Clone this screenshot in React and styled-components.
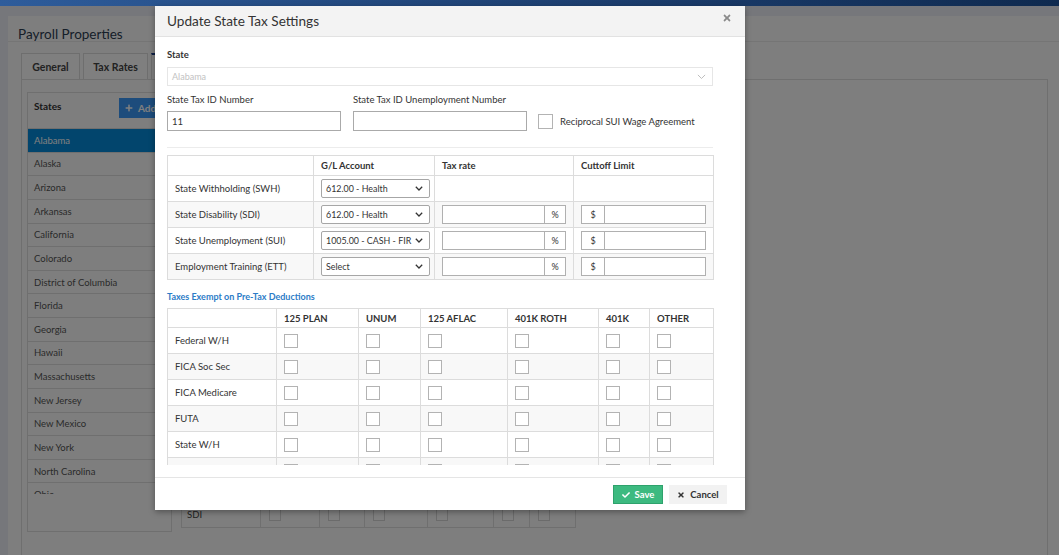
import React from "react";
import styled, { createGlobalStyle } from "styled-components";
import { FaCheck, FaTimes, FaPlus } from "react-icons/fa";

const GlobalStyle = createGlobalStyle`
  html, body { margin: 0; padding: 0; }
  body {
    font-family: Lato, "Open Sans", "Noto Sans", sans-serif;
    background: #eceff6;
    overflow: hidden;
  }
  * { box-sizing: border-box; }
`;

const Screen = styled.div`
  position: relative;
  width: 1059px;
  height: 555px;
  overflow: hidden;
  display: flex;
  flex-direction: column;
  background: #eceff6;
`;

const TopBar = styled.div`
  height: 6px;
  flex: none;
  background: linear-gradient(90deg, #2e5c9b 0%, #1d3f70 55%, #0f2a4f 100%);
`;

const Page = styled.div`
  flex: 1;
  display: flex;
  padding: 10px 0 0 8px;
  min-height: 0;
`;

const Panel = styled.div`
  flex: 1;
  background: #fdfdfd;
  display: flex;
  flex-direction: column;
`;

const PanelHeader = styled.div`
  height: 26px;
  padding: 10px 10px 0;
  font-size: 13.5px;
  line-height: 16px;
  color: #2c3e52;
  border-bottom: 1px solid #eaeaea;
`;

const TabBar = styled.div`
  display: flex;
  gap: 3px;
  margin-top: 11px;
  padding-left: 13px;
`;

const Tab = styled.div`
  height: 26px;
  width: ${(p) => p.$w}px;
  display: flex;
  align-items: center;
  justify-content: center;
  font-size: 10.5px;
  font-weight: 700;
  color: #444;
  border: 1px solid #dcdcdc;
  border-bottom: none;
  border-top: ${(p) => (p.$active ? "2px solid #1a3f8c" : "1px solid #dcdcdc")};
  background: #fff;
`;

const TabContent = styled.div`
  flex: 1;
  margin: 0 11px 0 13px;
  border: 1px solid #dedede;
  border-bottom: none;
  padding: 12px 5px 0;
  display: flex;
  align-items: flex-start;
  gap: 9px;
`;

const StatesBox = styled.div`
  width: 145px;
  height: 440px;
  border: 1px solid #dedede;
  display: flex;
  flex-direction: column;
`;

const StatesHeader = styled.div`
  height: 36px;
  flex: none;
  display: flex;
  justify-content: space-between;
  align-items: flex-start;
  padding: 5px 0 0 6px;
  border-bottom: 1px solid #dedede;
`;

const StatesTitle = styled.div`
  font-size: 10px;
  font-weight: 700;
  color: #333;
  margin-top: 2px;
`;

const AddButton = styled.div`
  width: 52px;
  height: 20px;
  background: #3b98f8;
  color: #fff;
  font-size: 10px;
  font-weight: 700;
  display: flex;
  align-items: center;
  gap: 5px;
  padding-left: 6px;
  svg { width: 8px; height: 8px; }
`;

const StateList = styled.div`
  height: 365px;
  overflow: hidden;
  flex: none;
`;

const StateRow = styled.div`
  height: 23.64px;
  display: flex;
  align-items: center;
  padding-left: 6px;
  font-size: 9.5px;
  color: ${(p) => (p.$selected ? "#fff" : "#555")};
  background: ${(p) => (p.$selected ? "#048ada" : "transparent")};
  border-bottom: 1px solid #dedede;
`;

const RightColumn = styled.div`
  margin-top: 259px;
`;

const BgTable = styled.table`
  border-collapse: collapse;
  table-layout: fixed;
  width: 394px;
`;

const BgCell = styled.td`
  height: ${(p) => p.$h || 26}px;
  border: 1px solid #dedede;
  padding: 0 5px;
  font-size: 9.5px;
  color: #444;
  vertical-align: middle;
`;

const BgCheck = styled.span`
  display: block;
  width: 12px;
  height: 12px;
  margin-left: 3px;
  border: 1px solid #d6d6d6;
  background: #fff;
`;

const Backdrop = styled.div`
  position: absolute;
  left: 0;
  right: 0;
  top: 6px;
  bottom: 0;
  background: rgba(0, 0, 0, 0.5);
`;

const Modal = styled.div`
  position: absolute;
  left: 155px;
  top: 6px;
  width: 590px;
  height: 504px;
  background: #fff;
  box-shadow: 0 2px 6px rgba(0, 0, 0, 0.35);
  display: flex;
  flex-direction: column;
`;

const ModalHeader = styled.div`
  height: 31px;
  flex: none;
  background: #f3f3f3;
  border-bottom: 1px solid #e2e2e2;
  display: flex;
  align-items: center;
  justify-content: space-between;
  padding: 0 13px 0 12px;
`;

const ModalTitle = styled.div`
  font-size: 13.6px;
  color: #333;
`;

const CloseIcon = styled.span`
  color: #8a8a8a;
  display: flex;
  margin-top: -6px;
  svg { width: 10px; height: 10px; }
`;

const ModalBody = styled.div`
  flex: 1;
  padding: 0 32px 12px 12px;
`;

const ScrollArea = styled.div`
  height: 428px;
  overflow-x: visible;
  overflow-y: clip;
  padding-top: 12px;
`;

const FieldLabel = styled.div`
  font-size: 9.5px;
  line-height: 11px;
  font-weight: ${(p) => (p.$bold ? 700 : 400)};
  color: #333;
`;

const StateSelect = styled.div`
  margin-top: 7px;
  height: 19px;
  border: 1px solid #e6e6e6;
  display: flex;
  align-items: center;
  justify-content: space-between;
  padding: 0 6px 0 4px;
  font-size: 9px;
  color: #c2c2c2;
`;

const IdRow = styled.div`
  margin-top: 8px;
  display: flex;
  align-items: flex-end;
  gap: 12px;
`;

const FieldGroup = styled.div`
  width: 174px;
  display: flex;
  flex-direction: column;
  gap: 6px;
`;

const TextInput = styled.div`
  height: 20px;
  border: 1px solid #aaa;
  display: flex;
  align-items: center;
  padding: 0 4px;
  font-size: 9.5px;
  color: #333;
`;

const CheckLabel = styled.div`
  display: flex;
  align-items: center;
  gap: 7px;
  height: 20px;
  margin-left: -1px;
  font-size: 9.5px;
  color: #333;
`;

const Box = styled.span`
  display: block;
  flex: none;
  width: ${(p) => p.$size || 14}px;
  height: ${(p) => p.$size || 14}px;
  border: 1px solid #b3b3b3;
  background: #fff;
`;

const Divider = styled.div`
  margin-top: 16px;
  height: 1px;
  background: #ececec;
`;

const DataTable = styled.table`
  margin-top: ${(p) => p.$mt || 0}px;
  width: 546px;
  border-collapse: collapse;
  table-layout: fixed;
`;

const HeadCell = styled.th`
  height: ${(p) => p.$h || 20}px;
  border: 1px solid #dcdcdc;
  padding: 0 7px;
  font-size: 9.5px;
  font-weight: 700;
  text-align: left;
  color: #333;
  background: #fff;
`;

const BodyRow = styled.tr`
  background: ${(p) => (p.$striped ? "#f8f8f8" : "#fff")};
`;

const Cell = styled.td`
  height: 26px;
  border: 1px solid #dcdcdc;
  padding: 0 7px;
  font-size: 9.5px;
  color: #333;
  vertical-align: middle;
`;

const GlSelect = styled.div`
  width: 109px;
  height: 19px;
  border: 1px solid #a6a6a6;
  border-radius: 2px;
  background: #fff;
  display: flex;
  align-items: center;
  gap: 3px;
  padding: 0 6px 0 4px;
  font-size: 8.9px;
  color: #333;
  white-space: nowrap;
  svg { flex: none; }
`;

const GlText = styled.span`
  flex: 1;
  overflow: hidden;
`;

const InputGroup = styled.div`
  display: flex;
  height: 19px;
`;

const GroupInput = styled.div`
  flex: 1;
  border: 1px solid #b0b0b0;
  background: #fff;
`;

const Addon = styled.div`
  width: ${(p) => p.$w}px;
  flex: none;
  border: 1px solid #b0b0b0;
  ${(p) => (p.$left ? "border-right: none;" : "border-left: none;")}
  background: #fff;
  display: flex;
  align-items: center;
  justify-content: center;
  font-size: 9px;
  color: #333;
`;

const SectionTitle = styled.div`
  margin-top: 11px;
  font-size: 9px;
  line-height: 11px;
  font-weight: 700;
  color: #2c7cc7;
`;

const ModalFooter = styled.div`
  height: 33px;
  flex: none;
  border-top: 1px solid #e5e5e5;
  display: flex;
  justify-content: flex-end;
  align-items: flex-start;
  gap: 6px;
  padding: 7px 18px 0 0;
`;

const Button = styled.div`
  height: 19px;
  width: ${(p) => p.$w}px;
  display: flex;
  align-items: center;
  justify-content: center;
  gap: 5px;
  font-size: 9.5px;
  font-weight: 700;
  color: ${(p) => (p.$primary ? "#fff" : "#333")};
  background: ${(p) => (p.$primary ? "#3dba80" : "#f2f2f2")};
  border: 1px solid ${(p) => (p.$primary ? "#2ea26c" : "#f2f2f2")};
  svg { width: 8px; height: 8px; }
`;

const Chevron = ({ color = "#333", w = 8, sw = 1.6 }) => (
  <svg width={w} height={w * 0.6} viewBox="0 0 10 6" fill="none">
    <polyline points="1,1 5,5 9,1" stroke={color} strokeWidth={sw} />
  </svg>
);

const states = [
  "Alabama", "Alaska", "Arizona", "Arkansas", "California", "Colorado",
  "District of Columbia", "Florida", "Georgia", "Hawaii", "Massachusetts",
  "New Jersey", "New Mexico", "New York", "North Carolina", "Ohio",
];

const taxRows = [
  { label: "State Withholding (SWH)", gl: "612.00 - Health", inputs: false },
  { label: "State Disability (SDI)", gl: "612.00 - Health", inputs: true },
  { label: "State Unemployment (SUI)", gl: "1005.00 - CASH - FIR", inputs: true },
  { label: "Employment Training (ETT)", gl: "Select", inputs: true },
];

const planCols = [
  { name: "", w: 109 },
  { name: "125 PLAN", w: 82 },
  { name: "UNUM", w: 62 },
  { name: "125 AFLAC", w: 87 },
  { name: "401K ROTH", w: 91 },
  { name: "401K", w: 51 },
  { name: "OTHER", w: 64 },
];

const exemptRows = ["Federal W/H", "FICA Soc Sec", "FICA Medicare", "FUTA", "State W/H", "SDI"];

/* rows of the page's own table; only the last one shows below the dialog */
const bgRows = ["", "", "", "", "", "SDI"];
const bgCols = [79, 59, 45, 63, 66, 36, 46];

export default function App() {
  return (
    <>
      <GlobalStyle />
      <Screen>
        <TopBar />
        <Page>
          <Panel>
            <PanelHeader>Payroll Properties</PanelHeader>
            <TabBar>
              <Tab $w={59}>General</Tab>
              <Tab $w={65}>Tax Rates</Tab>
              <Tab $w={80} $active>State Taxes</Tab>
            </TabBar>
            <TabContent>
              <StatesBox>
                <StatesHeader>
                  <StatesTitle>States</StatesTitle>
                  <AddButton>
                    <FaPlus /> Add
                  </AddButton>
                </StatesHeader>
                <StateList>
                  {states.map((s, i) => (
                    <StateRow key={s} $selected={i === 0}>
                      {s}
                    </StateRow>
                  ))}
                </StateList>
              </StatesBox>
              <RightColumn>
                <BgTable>
                  <colgroup>
                    {bgCols.map((w, i) => (
                      <col key={i} style={{ width: w }} />
                    ))}
                  </colgroup>
                  <tbody>
                    <tr>
                      {bgCols.map((w, i) => (
                        <BgCell key={i} $h={20} />
                      ))}
                    </tr>
                    {bgRows.map((r, k) => (
                      <tr key={k}>
                        <BgCell>{r}</BgCell>
                        {bgCols.slice(1).map((w, i) => (
                          <BgCell key={i}>
                            <BgCheck />
                          </BgCell>
                        ))}
                      </tr>
                    ))}
                  </tbody>
                </BgTable>
              </RightColumn>
            </TabContent>
          </Panel>
        </Page>

        <Backdrop />

        <Modal>
          <ModalHeader>
            <ModalTitle>Update State Tax Settings</ModalTitle>
            <CloseIcon>
              <FaTimes />
            </CloseIcon>
          </ModalHeader>
          <ModalBody>
            <ScrollArea>
              <FieldLabel $bold>State</FieldLabel>
              <StateSelect>
                <span>Alabama</span>
                <Chevron color="#b5b5b5" w={9} sw={1} />
              </StateSelect>
              <IdRow>
                <FieldGroup>
                  <FieldLabel>State Tax ID Number</FieldLabel>
                  <TextInput>11</TextInput>
                </FieldGroup>
                <FieldGroup>
                  <FieldLabel>State Tax ID Unemployment Number</FieldLabel>
                  <TextInput />
                </FieldGroup>
                <CheckLabel>
                  <Box $size={15} />
                  Reciprocal SUI Wage Agreement
                </CheckLabel>
              </IdRow>
              <Divider />
              <DataTable $mt={7}>
                <colgroup>
                  <col style={{ width: 146 }} />
                  <col style={{ width: 121 }} />
                  <col style={{ width: 139 }} />
                  <col style={{ width: 140 }} />
                </colgroup>
                <thead>
                  <tr>
                    <HeadCell />
                    <HeadCell>G/L Account</HeadCell>
                    <HeadCell>Tax rate</HeadCell>
                    <HeadCell>Cuttoff Limit</HeadCell>
                  </tr>
                </thead>
                <tbody>
                  {taxRows.map((r, i) => (
                    <BodyRow key={r.label} $striped={i % 2 === 1}>
                      <Cell>{r.label}</Cell>
                      <Cell>
                        <GlSelect>
                          <GlText>{r.gl}</GlText>
                          <Chevron />
                        </GlSelect>
                      </Cell>
                      <Cell>
                        {r.inputs && (
                          <InputGroup>
                            <GroupInput />
                            <Addon $w={21}>%</Addon>
                          </InputGroup>
                        )}
                      </Cell>
                      <Cell>
                        {r.inputs && (
                          <InputGroup>
                            <Addon $w={23} $left>$</Addon>
                            <GroupInput />
                          </InputGroup>
                        )}
                      </Cell>
                    </BodyRow>
                  ))}
                </tbody>
              </DataTable>
              <SectionTitle>Taxes Exempt on Pre-Tax Deductions</SectionTitle>
              <DataTable $mt={6}>
                <colgroup>
                  {planCols.map((c, i) => (
                    <col key={i} style={{ width: c.w }} />
                  ))}
                </colgroup>
                <thead>
                  <tr>
                    {planCols.map((c, i) => (
                      <HeadCell key={i} $h={19}>
                        {c.name}
                      </HeadCell>
                    ))}
                  </tr>
                </thead>
                <tbody>
                  {exemptRows.map((r, i) => (
                    <BodyRow key={r} $striped={i % 2 === 1}>
                      <Cell>{r}</Cell>
                      {planCols.slice(1).map((c, j) => (
                        <Cell key={j}>
                          <Box />
                        </Cell>
                      ))}
                    </BodyRow>
                  ))}
                </tbody>
              </DataTable>
            </ScrollArea>
          </ModalBody>
          <ModalFooter>
            <Button $primary $w={50}>
              <FaCheck /> Save
            </Button>
            <Button $w={58}>
              <FaTimes /> Cancel
            </Button>
          </ModalFooter>
        </Modal>
      </Screen>
    </>
  );
}
